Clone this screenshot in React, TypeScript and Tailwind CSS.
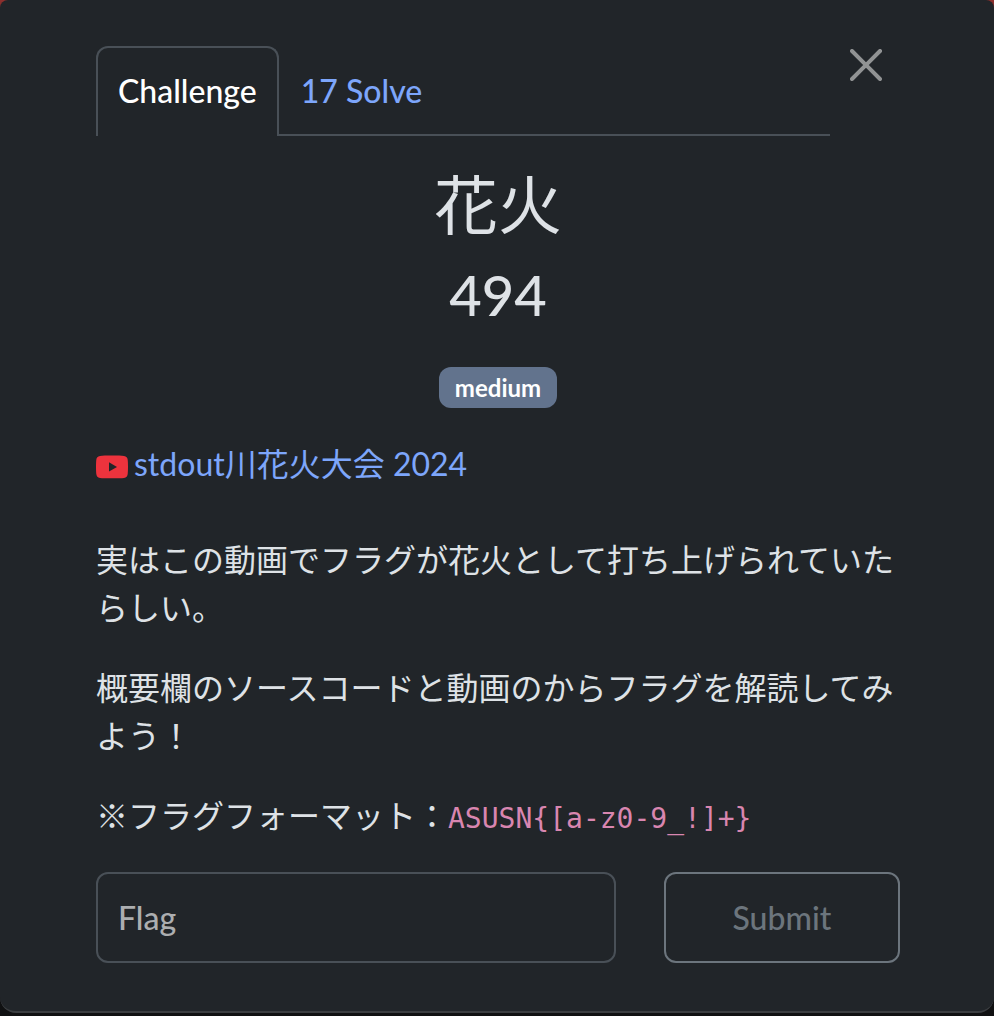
import { useState } from "react";

const link = "text-[#7da6fb] hover:underline";

function CloseIcon() {
  return (
    <svg viewBox="0 0 16 16" className="size-8" fill="#919394" aria-hidden="true">
      <path d="M.293.293a1 1 0 0 1 1.414 0L8 6.586 14.293.293a1 1 0 1 1 1.414 1.414L9.414 8l6.293 6.293a1 1 0 0 1-1.414 1.414L8 9.414l-6.293 6.293a1 1 0 0 1-1.414-1.414L6.586 8 .293 1.707a1 1 0 0 1 0-1.414z" />
    </svg>
  );
}

function VideoIcon() {
  return (
    <svg viewBox="0 0 32 24" className="mt-1.5 h-6 w-8 shrink-0" aria-hidden="true">
      <path
        fill="#ed333d"
        d="M4 .9C8 .3 24 .3 28 .9c2.400.3 3.400 1.500 3.700 3.900.4 4 .4 10.400 0 14.200-.3 2.400-1.300 3.600-3.700 3.900-4 .6-20 .6-24 0C1.600 22.600.6 21.400.3 19-.1 15.200-.1 8.800.3 4.800.6 2.400 1.600 1.200 4 .9Z"
      />
      <path fill="#212529" d="m13 7.200 8 4.700-8 4.700Z" />
    </svg>
  );
}

export default function App() {
  const [flag, setFlag] = useState("");

  return (
    <div className="min-h-screen bg-linear-to-b from-[#8f302e] to-[#101112] to-5% font-[Lato,'Noto_Sans_CJK_JP',sans-serif] text-[32px] leading-[48px] text-[#dee2e6]">
      <main className="rounded-t-lg rounded-b-2xl border-b-2 border-[#3b3e41] bg-[#212529] pt-[46px] pr-[94px] pb-12 pl-24">
        <header className="flex items-start pr-[18px]">
          <nav className="flex grow font-medium" aria-label="Challenge sections">
            <button
              type="button"
              className="rounded-t-xl border-2 border-b-0 border-[#495057] px-5 pt-[19px] pb-[21px] text-white"
            >
              Challenge
            </button>
            <button
              type="button"
              className="grow border-b-2 border-[#495057] px-[22px] pt-[21px] pb-[19px] text-left text-[#7da6fb]"
            >
              17 Solve
            </button>
          </nav>
          <button type="button" aria-label="Close" className="mt-[3px] ml-5">
            <CloseIcon />
          </button>
        </header>

        <section className="mt-[30px] text-center">
          <h1 className="text-[64px] leading-[77px]">花火</h1>
          <h2 className="mt-[18px] text-[56px] leading-[67px] font-medium">494</h2>
          <div className="mt-[39px] flex justify-center">
            <span className="rounded-xl bg-[#62738d] px-4 py-2 text-2xl leading-[25px] font-bold text-white">
              medium
            </span>
          </div>
        </section>

        <section className="mt-8">
          <a href="#video" className={`flex items-center gap-[6px] ${link}`}>
            <VideoIcon />
            <span>stdout川花火大会 2024</span>
          </a>
          <div className="mt-12 space-y-8">
            <p>実はこの動画でフラグが花火として打ち上げられていたらしい。</p>
            <p>概要欄のソースコードと動画のからフラグを解読してみよう！</p>
            <p>
              ※フラグフォーマット：
              <code className="font-['DejaVu_Sans_Mono',monospace] text-[28px] leading-none text-[#d986b0]">
                {"ASUSN{[a-z0-9_!]+}"}
              </code>
            </p>
          </div>
        </section>

        <form
          className="mt-8 grid grid-cols-[11fr_5fr] gap-12 font-medium"
          onSubmit={(event) => event.preventDefault()}
        >
          <input
            type="text"
            aria-label="Flag"
            placeholder="Flag"
            value={flag}
            onChange={(event) => setFlag(event.target.value)}
            className="min-w-0 rounded-xl border-2 border-[#495057] bg-transparent px-5 py-5 leading-[47px] placeholder:text-[#acaeb0]"
          />
          <button
            type="submit"
            className="rounded-xl border-2 border-[#6c757d] py-5 leading-[47px] text-[#6c757d]"
          >
            Submit
          </button>
        </form>
      </main>
    </div>
  );
}
